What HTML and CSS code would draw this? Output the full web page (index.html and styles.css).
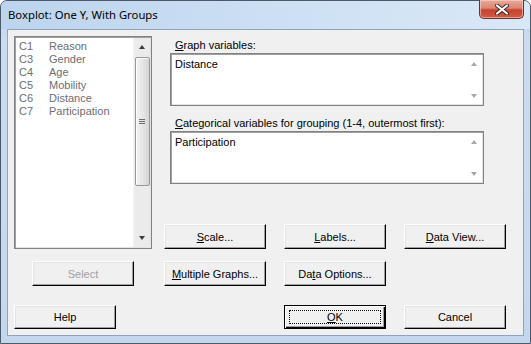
FILE: index.html
```html
<!DOCTYPE html>
<html>
<head>
<meta charset="utf-8">
<link rel="stylesheet" href="styles.css">
</head>
<body>
<div class="window">
  <div class="titlebar">
    <span class="title">Boxplot: One Y, With Groups</span>
    <div class="close-btn">
      <svg width="14" height="11" viewBox="0 0 14 11">
        <path d="M2 1.5 L12 9.5 M12 1.5 L2 9.5" stroke="#3a2a28" stroke-width="4" stroke-linecap="round"/>
        <path d="M2 1.5 L12 9.5 M12 1.5 L2 9.5" stroke="#ffffff" stroke-width="2.2" stroke-linecap="round"/>
      </svg>
    </div>
  </div>
  <div class="client">
    <div class="listbox">
      <div class="list-items">
        <div class="list-row"><span class="col-id">C1</span><span>Reason</span></div>
        <div class="list-row"><span class="col-id">C3</span><span>Gender</span></div>
        <div class="list-row"><span class="col-id">C4</span><span>Age</span></div>
        <div class="list-row"><span class="col-id">C5</span><span>Mobility</span></div>
        <div class="list-row"><span class="col-id">C6</span><span>Distance</span></div>
        <div class="list-row"><span class="col-id">C7</span><span>Participation</span></div>
      </div>
      <div class="vscroll">
        <div class="arrow-up dark"></div>
        <div class="thumb"><div class="grip"></div></div>
        <div class="track-fill"></div>
        <div class="arrow-down dark"></div>
      </div>
    </div>

    <div class="right-panel">
      <div class="field-label"><u>G</u>raph variables:</div>
      <div class="textbox">
        <div class="textbox-text">Distance</div>
        <div class="tb-scroll">
          <div class="arrow-up"></div>
          <div class="arrow-down"></div>
        </div>
      </div>
      <div class="field-label second"><u>C</u>ategorical variables for grouping (1-4, outermost first):</div>
      <div class="textbox">
        <div class="textbox-text">Participation</div>
        <div class="tb-scroll">
          <div class="arrow-up"></div>
          <div class="arrow-down"></div>
        </div>
      </div>
      <div class="button-row">
        <div class="btn"><span><u>S</u>cale...</span></div>
        <div class="btn"><span><u>L</u>abels...</span></div>
        <div class="btn"><span><u>D</u>ata View...</span></div>
      </div>
    </div>

    <div class="btn disabled select-btn"><span>Select</span></div>
    <div class="btn row2 c2"><span><u>M</u>ultiple Graphs...</span></div>
    <div class="btn row2 c3"><span>Da<u>t</u>a Options...</span></div>

    <div class="btn row3 c1"><span>Help</span></div>
    <div class="btn default row3 c3"><span class="focus"><u>O</u>K</span></div>
    <div class="btn row3 c4"><span>Cancel</span></div>
  </div>
</div>
</body>
</html>
```

FILE: styles.css
```css
* { box-sizing: border-box; }

html, body {
  margin: 0;
  padding: 0;
  width: 531px;
  height: 344px;
  overflow: hidden;
  background: #ffffff;
}

.window {
  width: 531px;
  height: 344px;
  border: 1px solid #4b5a6b;
  border-radius: 7px 7px 0 0;
  background: linear-gradient(to bottom, #bcd3ed 0px, #c9dcf1 40px, #c3d8ef 100%);
  display: flex;
  flex-direction: column;
  font-family: "Liberation Sans", Arial, sans-serif;
  font-size: 11px;
  color: #000;
}

.titlebar {
  height: 28px;
  flex: none;
  display: flex;
  align-items: flex-start;
  justify-content: space-between;
  padding-left: 7px;
  padding-right: 6px;
  background: linear-gradient(to right, #bcd4ee 0%, #cfe1f4 60%, #d9e8f7 100%);
  border-radius: 6px 6px 0 0;
}

.title {
  font-family: "Noto Sans", "Open Sans", sans-serif;
  font-size: 11.3px;
  line-height: 14px;
  margin-top: 7px;
  color: #000;
}

.close-btn {
  width: 45px;
  height: 19px;
  margin-top: -1px;
  border: 1px solid #6f3127;
  border-top: none;
  border-radius: 0 0 5px 5px;
  background: linear-gradient(to bottom, #e9a99a 0%, #dc8672 45%, #c8422f 55%, #cf5c44 100%);
  box-shadow: inset 0 0 0 1px rgba(255, 220, 210, 0.55);
  display: flex;
  align-items: center;
  justify-content: center;
}

.client {
  flex: 1;
  margin: 0 6px 7px 6px;
  border: 1px solid #8ea4bb;
  background: #f0f0f0;
  padding: 6px 0 0 6px;
  display: grid;
  grid-template-columns: 132px 102px 102px 102px;
  grid-template-rows: 213px 37px 43px;
  column-gap: 18px;
  align-content: start;
}

/* sunken control border */
.listbox, .textbox {
  border: 1px solid #828282;
  box-shadow: inset 1px 1px 0 #a0a0a0, inset -1px -1px 0 #e3e3e3;
  background: #fff;
  padding: 1px;
}

.listbox {
  grid-column: 1;
  grid-row: 1;
  width: 138px;
  height: 213px;
  display: flex;
}

.list-items {
  flex: 1;
  padding: 2px 0 0 3px;
  color: #6d6d72;
}

.list-row {
  display: flex;
  height: 13px;
  line-height: 13px;
  white-space: nowrap;
}

.col-id {
  width: 30px;
  flex: none;
}

.vscroll {
  width: 17px;
  flex: none;
  display: flex;
  flex-direction: column;
  align-items: center;
  background: #ebebeb;
  border-left: 1px solid #f4f4f4;
}

.arrow-up, .arrow-down {
  width: 0;
  height: 0;
  border-left: 3.5px solid transparent;
  border-right: 3.5px solid transparent;
  flex: none;
}

.arrow-up { border-bottom: 4px solid #a8a8a8; }
.arrow-down { border-top: 4px solid #a8a8a8; }
.arrow-up.dark { border-bottom-color: #3c3c3c; }
.arrow-down.dark { border-top-color: #3c3c3c; }

.vscroll .arrow-up { margin-top: 7px; }
.vscroll .arrow-down { margin-bottom: 7px; }

.thumb {
  margin-top: 8px;
  width: 15px;
  height: 129px;
  border: 1px solid #979797;
  border-radius: 2px;
  background: linear-gradient(to right, #f3f3f3 0%, #e6e6e6 50%, #d4d4d4 100%);
  box-shadow: inset 1px 1px 0 #fdfdfd;
  display: flex;
  align-items: center;
  justify-content: center;
}

.grip {
  width: 6px;
  height: 5px;
  background: repeating-linear-gradient(to bottom, #6e6e6e 0, #6e6e6e 1px, transparent 1px, transparent 2px);
}

.track-fill { flex: 1; }

.right-panel {
  grid-column: 2 / 5;
  grid-row: 1;
  display: flex;
  flex-direction: column;
  height: 213px;
}

.field-label {
  height: 14px;
  line-height: 14px;
  margin: 2px 0 1px 11px;
  white-space: nowrap;
}

.field-label.second { margin-top: 10px; }

.textbox {
  margin-left: 6px;
  width: 314px;
  height: 53px;
  display: flex;
  flex: none;
}

.textbox-text {
  flex: 1;
  padding: 3px 0 0 3px;
  line-height: 13px;
}

.tb-scroll {
  width: 17px;
  flex: none;
  display: flex;
  flex-direction: column;
  align-items: center;
  justify-content: space-between;
  padding: 7px 0 6px;
}

.button-row {
  margin-top: auto;
  display: flex;
  gap: 18px;
}

.btn {
  width: 102px;
  height: 25px;
  background: #f0f0f0;
  border: 1px solid;
  border-color: #ffffff #000000 #000000 #ffffff;
  box-shadow: inset -1px -1px 0 #a0a0a0, inset 1px 1px 0 #e3e3e3;
  display: flex;
  align-items: center;
  justify-content: center;
  white-space: nowrap;
  line-height: 13px;
}

.btn span { padding-top: 1px; }

.btn.disabled { color: #a0a0a0; }

.select-btn {
  grid-column: 1;
  grid-row: 2;
  align-self: end;
  margin-left: 18px;
}

.row2 { grid-row: 2; align-self: end; }
.row3 { grid-row: 3; align-self: end; height: 24px; }
.c1 { grid-column: 1; }
.c2 { grid-column: 2; }
.c3 { grid-column: 3; }
.c4 { grid-column: 4; }

.btn.default {
  border: 1px solid #000;
  box-shadow: inset 1px 1px 0 #ffffff, inset -1px -1px 0 #000000, inset -2px -2px 0 #a0a0a0;
  position: relative;
}

.btn.default .focus {
  position: absolute;
  left: 4px;
  top: 4px;
  right: 4px;
  bottom: 4px;
  border: 1px dotted #000;
  display: flex;
  align-items: center;
  justify-content: center;
  padding-top: 1px;
}
```
